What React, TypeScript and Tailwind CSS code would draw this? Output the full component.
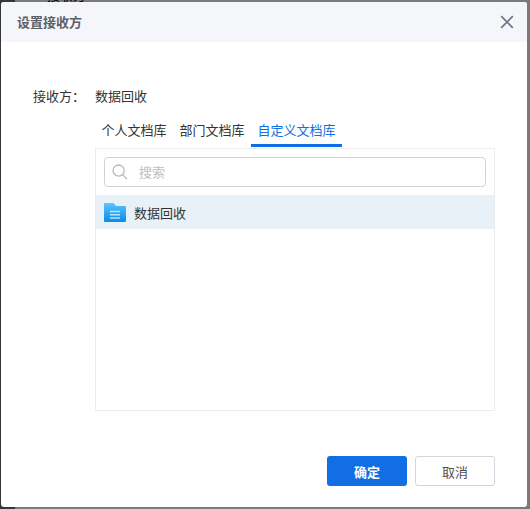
import { useState } from "react";

const tabs = ["个人文档库", "部门文档库", "自定义文档库"];

const CloseIcon = () => (
  <svg width="14" height="14" viewBox="0 0 14 14" fill="none" stroke="#747888" strokeWidth="1.8">
    <path d="M1.2 1.2L12.8 12.8M12.8 1.2L1.2 12.8" />
  </svg>
);

const SearchIcon = () => (
  <svg width="16" height="16" viewBox="0 0 16 16" fill="none" stroke="#b8b8b8" strokeWidth="1.3">
    <circle cx="6.6" cy="6.6" r="5.6" />
    <path d="M10.6 10.6L15 15" />
  </svg>
);

const FolderIcon = () => (
  <svg width="22" height="19" viewBox="0 0 22 19">
    <defs>
      <linearGradient id="folder" x1="0" y1="0" x2="0" y2="1">
        <stop offset="0" stopColor="#5cc4fb" />
        <stop offset="1" stopColor="#078bee" />
      </linearGradient>
    </defs>
    <path d="M0 1Q0 0 1 0H9.5L12 3H21Q22 3 22 4V18Q22 19 21 19H1Q0 19 0 18Z" fill="url(#folder)" />
    <path d="M6 8.5H16M6 11.7H16M6 14.9H16" stroke="#b9e3fe" strokeWidth="1.5" />
  </svg>
);

const App = () => {
  const [active, setActive] = useState(2);
  const [keyword, setKeyword] = useState("");

  return (
    <div className="relative h-[509px] w-[530px] overflow-hidden bg-[#7b7b7b] pt-[2px] pl-px font-['Noto_Sans_CJK_SC',sans-serif] text-[13px] leading-5 text-[#333]">
      {/* Dimmed page behind the dialog */}
      <div className="absolute inset-y-0 left-0 w-[15px] bg-[#343638]" />
      <div className="absolute top-[-13px] left-[47px] text-[13px] leading-4 text-black">接收方</div>

      <div className="relative flex h-[505px] w-[526px] flex-col overflow-hidden rounded-[3px] bg-white">
        <header className="flex h-10 shrink-0 items-center justify-between bg-[#f5f6f9] pr-[13px] pl-4">
          <h1 className="font-bold text-[#5c5e6b]">设置接收方</h1>
          <button aria-label="关闭">
            <CloseIcon />
          </button>
        </header>

        <main className="flex flex-col pt-11 pr-8 pl-8">
          <div className="flex">
            <span className="w-[62px]">接收方：</span>
            <span>数据回收</span>
          </div>

          <div className="ml-[62px] flex h-[41px] pt-[14px]">
            {tabs.map((tab, i) => (
              <button
                key={tab}
                onClick={() => setActive(i)}
                className={
                  i === active
                    ? "h-[27px] border-b-[3px] border-[#126fe3] px-[6.5px] pb-1.5 text-[#126fe3]"
                    : "h-[27px] border-b-[3px] border-transparent px-[6.5px] pb-1.5"
                }
              >
                {tab}
              </button>
            ))}
          </div>

          <section className="mt-px ml-[62px] h-[263px] w-[400px] border border-[#ececec]">
            <label className="m-2 flex h-[30px] items-center rounded border border-[#d0d0da] pl-[7px]">
              <SearchIcon />
              <input
                value={keyword}
                onChange={(e) => setKeyword(e.target.value)}
                placeholder="搜索"
                className="ml-[11px] w-[330px] outline-none placeholder:text-[#bebebe]"
              />
            </label>
            <div className="flex h-[34px] items-center bg-[#e8f1f7] pt-px pl-2">
              <FolderIcon />
              <span className="ml-2">数据回收</span>
            </div>
          </section>
        </main>

        <footer className="mt-[45px] flex justify-end gap-2 pr-8">
          <button className="h-[30px] w-20 rounded-[3px] bg-[#126fe3] pt-px font-bold text-white">确定</button>
          <button className="h-[30px] w-20 rounded-[3px] border border-[#d3d4dd] pt-px text-[#505050]">取消</button>
        </footer>
      </div>
    </div>
  );
};

export default App;
